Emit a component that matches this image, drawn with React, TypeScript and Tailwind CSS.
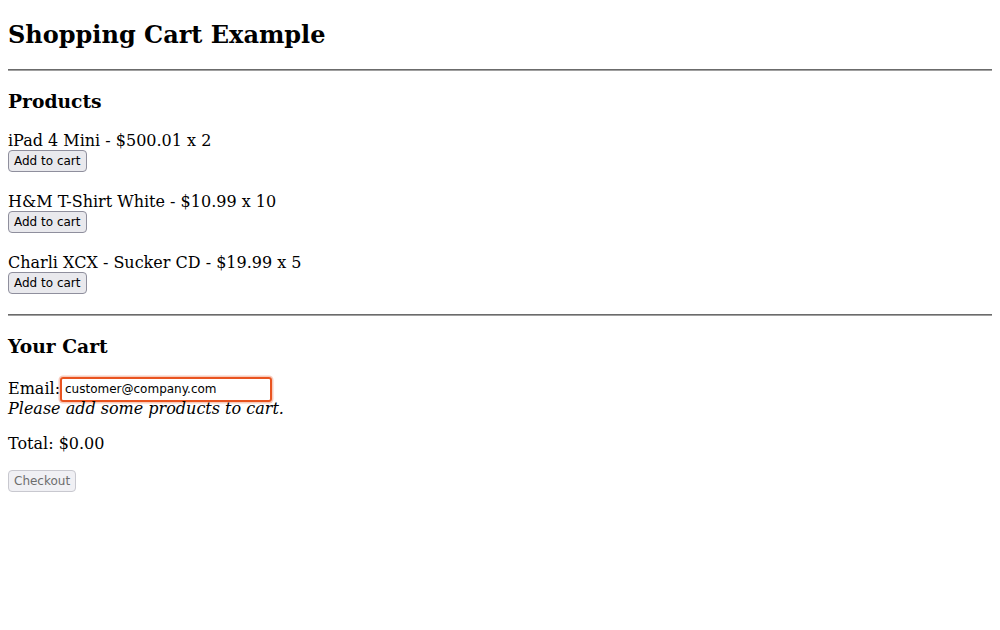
import React from "react";

const products = [
  { title: "iPad 4 Mini", price: "500.01", qty: 2 },
  { title: "H&M T-Shirt White", price: "10.99", qty: 10 },
  { title: "Charli XCX - Sucker CD", price: "19.99", qty: 5 },
];

const btn =
  "inline-block align-baseline px-[5px] py-[3px] border border-[#8f8f9d] bg-[#e9e9ed] rounded-[4px] text-[12px] leading-[normal] text-black [font-family:'DejaVu_Sans',sans-serif]";

export default function App() {
  return (
    <div className="mx-2 text-[16px] leading-[normal] text-black bg-white [font-family:'DejaVu_Serif',serif]">
      <h2 className="text-[24px] font-bold my-[19.92px] leading-[normal]">Shopping Cart Example</h2>
      <hr className="my-2 h-0 border-t border-b border-t-[#6b6b6b] border-b-[#a0a0a0]" />
      <div>
        <h3 className="text-[18.72px] font-bold my-[18.72px] leading-[normal]">Products</h3>
        <div className="pt-px">
          {products.map((p) => (
            <div key={p.title} className="mb-5">
              <div>
                {p.title} - ${p.price} x {p.qty}
              </div>
              <button className={btn}>Add to cart</button>
            </div>
          ))}
        </div>
      </div>
      <hr className="my-2 h-0 border-t border-b border-t-[#6b6b6b] border-b-[#a0a0a0]" />
      <div>
        <h3 className="text-[18.72px] font-bold my-[18.72px] leading-[normal]">Your Cart</h3>
        <div className="pt-px">
          <label>Email:</label>
          <input
            readOnly
            value="customer@company.com"
            className="align-baseline w-[212px] px-[3px] py-[3.5px] border-2 border-[#e95420] rounded-[3px] shadow-[0_0_0_1.5px_rgba(233,84,32,0.3)] outline-none text-[12px] leading-[normal] text-black [font-family:'DejaVu_Sans',sans-serif]"
          />
        </div>
        <div className="-mt-[3px]">
          <em>Please add some products to cart.</em>
        </div>
        <p className="my-4">Total: $0.00</p>
        <div className="pt-px">
          <button
            disabled
            className="inline-block px-[5px] py-[3px] border border-[#c8c8cf] bg-[#f0f0f4] rounded-[4px] text-[12px] leading-[normal] text-[#6d6d6d] [font-family:'DejaVu_Sans',sans-serif]"
          >
            Checkout
          </button>
        </div>
      </div>
    </div>
  );
}
